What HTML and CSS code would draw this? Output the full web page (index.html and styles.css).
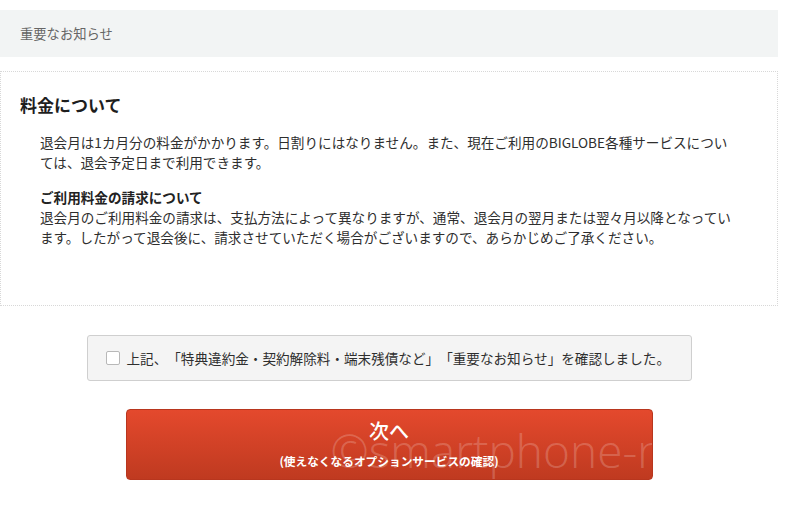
FILE: index.html
```html
<!DOCTYPE html>
<html lang="ja">
<head>
<meta charset="utf-8">
<link rel="stylesheet" href="styles.css">
</head>
<body>
<div class="page">
  <div class="notice-bar">重要なお知らせ</div>
  <section class="card">
    <h2 class="card-title">料金について</h2>
    <div class="card-body">
      <p class="para">退会月は1カ月分の料金がかかります。日割りにはなりません。また、現在ご利用のBIGLOBE各種サービスについては、退会予定日まで利用できます。</p>
      <p class="para"><strong class="sub">ご利用料金の請求について</strong><br>退会月のご利用料金の請求は、支払方法によって異なりますが、通常、退会月の翌月または翌々月以降となっています。したがって退会後に、請求させていただく場合がございますので、あらかじめご了承ください。</p>
    </div>
  </section>
  <label class="confirm">
    <span class="check"></span>
    <span class="confirm-text">上記、「特典違約金・契約解除料・端末残債など」「重要なお知らせ」を確認しました。</span>
  </label>
  <div class="btn-wrap">
    <a class="next-btn">
      <span class="next-main">次へ</span>
      <span class="next-sub">(使えなくなるオプションサービスの確認)</span>
      <span class="watermark">©smartphone-n</span>
    </a>
  </div>
</div>
</body>
</html>
```
FILE: styles.css
```css
* { box-sizing: border-box; }
html, body { margin: 0; padding: 0; background: #fff; }
body {
  font-family: "Noto Sans CJK JP", "Noto Sans", sans-serif;
  color: #222;
  text-spacing-trim: space-all;
}
.page {
  width: 778px;
  padding-top: 10px;
}
.notice-bar {
  height: 47px;
  background: #f2f4f4;
  color: #666;
  font-size: 13.3px;
  line-height: 47px;
  padding-left: 20px;
}
.card {
  margin-top: 14px;
  border: 1px dotted #d8d8d8;
  height: 235px;
  padding: 21px 20px 0 19px;
}
.card-title {
  margin: 0;
  font-size: 17px;
  line-height: 24px;
  font-weight: bold;
  color: #1e1e1e;
}
.card-body {
  margin-top: 15px;
  padding-left: 20px;
  width: 720px;
}
.para {
  margin: 0 0 15px 0;
  font-size: 13.6px;
  line-height: 20px;
  color: #2e2e2e;
}
.sub { font-weight: bold; color: #222; }
.confirm {
  display: flex;
  align-items: center;
  gap: 7px;
  width: 605px;
  height: 46px;
  margin: 29px auto 0;
  padding-left: 18px;
  background: #f4f4f4;
  border: 1px solid #cfcfcf;
  border-radius: 3px;
  font-size: 13.6px;
  color: #2e2e2e;
}
.check {
  width: 14px;
  height: 14px;
  background: #fff;
  border: 1px solid #b8b8b8;
  border-radius: 2px;
  flex: none;
}
.btn-wrap {
  display: flex;
  justify-content: center;
  margin-top: 28px;
}
.next-btn {
  position: relative;
  overflow: hidden;
  width: 527px;
  height: 71px;
  border-radius: 4px;
  background: linear-gradient(#e4492d, #bf3a20);
  border: 1px solid #b8361e;
  color: #fff;
  display: flex;
  flex-direction: column;
  align-items: center;
  padding-top: 7px;
}
.next-main {
  font-size: 20px;
  line-height: 28px;
  font-weight: 500;
}
.next-sub {
  margin-top: 8px;
  font-size: 11.7px;
  line-height: 15px;
  font-weight: bold;
}
.watermark {
  position: absolute;
  left: 204px;
  top: 12px;
  font-family: "Open Sans", "Liberation Sans", sans-serif;
  font-weight: 300;
  font-size: 46px;
  line-height: 56px;
  color: rgba(255, 255, 255, 0.2);
  white-space: nowrap;
}
```
